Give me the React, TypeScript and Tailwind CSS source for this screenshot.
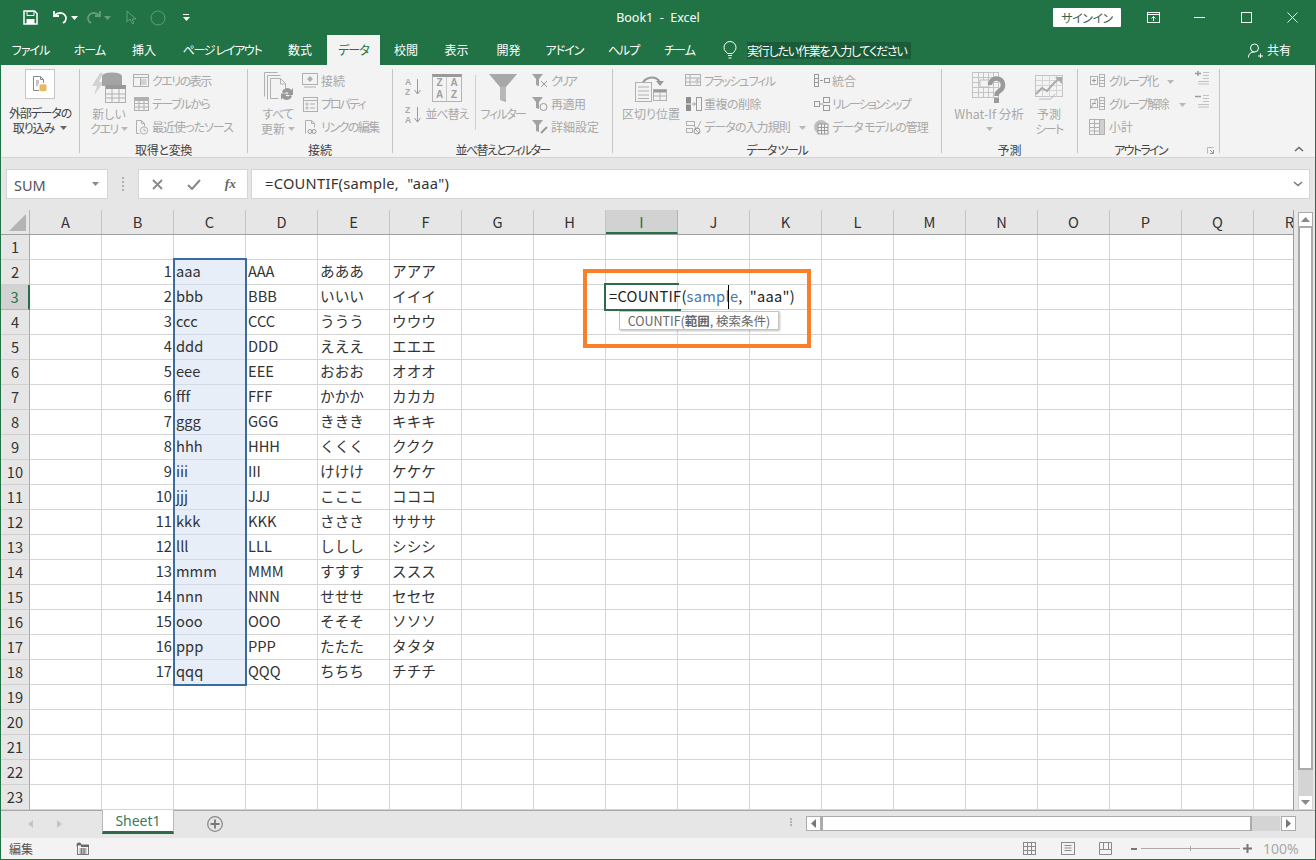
import React from 'react';

const G = '#b0b0b0';

const Ic = ({ w = 16, h = 16, children, cls = '' }: { w?: number; h?: number; children: React.ReactNode; cls?: string }) => (
  <svg width={w} height={h} viewBox={`0 0 ${w} ${h}`} fill="none" className={'shrink-0 ' + cls}>{children}</svg>
);

const Arrow = ({ c = '#8a8a8a' }: { c?: string }) => (
  <svg width="7" height="4" viewBox="0 0 7 4" className="inline-block shrink-0"><path d="M0 0h7L3.5 4z" fill={c} /></svg>
);

const Small = ({ icon, text, arrow, gap = 'gap-[3px]', tr = '' }: { icon: React.ReactNode; text: string; arrow?: string; gap?: string; tr?: string }) => (
  <div className={'flex items-center h-[23px] whitespace-nowrap text-[12px] text-[#a8a8a8] ' + gap}>
    {icon}
    <span className={tr}>{text}</span>
    {arrow && <span className={arrow}><Arrow c="#b8b8b8" /></span>}
  </div>
);

const Large = ({ icon, lines, cls }: { icon: React.ReactNode; lines: React.ReactNode[]; cls: string }) => (
  <div className={'flex flex-col items-center shrink-0 ' + cls}>
    <div className="h-[37px] flex items-center justify-center">{icon}</div>
    {lines.map((l, i) => (
      <div key={i} className="h-[15px] leading-[15px] text-[12px] whitespace-nowrap flex items-center gap-[3px] text-[#a8a8a8]">{l}</div>
    ))}
  </div>
);

const Group = ({ w, label, children, labelCls = '', extra }: { w: string; label: string; children: React.ReactNode; labelCls?: string; extra?: React.ReactNode }) => (
  <div className={'h-[84px] shrink-0 flex flex-col border-r border-[#c6c6c6] ' + w}>
    <div className="h-[73px] shrink-0 flex items-start">{children}</div>
    <div className={'relative h-[16px] shrink-0 leading-[16px] text-[12px] text-[#444] text-center whitespace-nowrap ' + labelCls}>
      {label}
      {extra}
    </div>
  </div>
);

/* ribbon icons */
const IcQuery = () => (
  <Ic><rect x=".5" y="1.5" width="15" height="12" stroke={G} /><path d="M1 4.500h14M7.500 7h6M7.500 9h6M7.500 11h6M7.500 5v8" stroke={G} /></Ic>
);
const IcTable = () => (
  <Ic><rect x="1.5" y="1.5" width="14" height="13" stroke={G} /><path d="M1.500 4.500h14M1.500 7.500h14M1.500 11h14M6 2v13M11 2v13" stroke={G} /><path d="M1.500 2h14v2h-14z" fill={G} /></Ic>
);
const IcRecent = () => (
  <Ic><path d="M3.500 14.500v-13h5l3 3v3M3.500 14.500h3M8.500 1.500v3h3" stroke={G} /><circle cx="11" cy="11.500" r="3.700" stroke={G} /><path d="M11 9.500v2.200h2" stroke={G} /></Ic>
);
const IcConn = () => (
  <Ic><rect x=".5" y=".5" width="15" height="11" stroke={G} /><path d="M2 14h12" stroke={G} /><path d="M5 6l3-3 3 3-3 3z" fill={G} /></Ic>
);
const IcProp = () => (
  <Ic><rect x="1.500" y="1.500" width="14" height="14" stroke={G} /><path d="M1.500 4.500h14" stroke={G} /><path d="M4 7h2v2H4zM4 11h2v2H4z" stroke={G} strokeWidth=".8" /><path d="M8 8h5M8 12h5" stroke={G} /></Ic>
);
const IcLink = () => (
  <Ic><path d="M3.500 14.500v-13h6l3 3v4M9.500 1.500v3h3" stroke={G} /><circle cx="8" cy="12.500" r="2" stroke="#999" /><circle cx="12" cy="12.500" r="2" stroke="#999" /></Ic>
);
const IcNew = () => (
  <Ic w={36} h={34}>
    <path d="M9 2L1 15h5l-3 9 10-13H8l4-9z" fill="#d2d2d2" />
    <ellipse cx="21" cy="5" rx="10" ry="3.500" fill="#a4a4a4" />
    <path d="M11 5v10h20V5z" fill="#a4a4a4" />
    <rect x="14.500" y="14.500" width="20" height="17" fill="#f3f3f3" stroke={G} />
    <path d="M15 14h20v4H15z" fill="#999" />
    <path d="M15 23h19M15 27h19M21 18v13M28 18v13" stroke={G} />
  </Ic>
);
const IcRefresh = () => (
  <Ic w={32} h={34}>
    <path d="M2.500 1.500h13M2.500 1.500v24M5.500 4.500h13M5.500 4.500v24" stroke={G} />
    <path d="M8.500 7.500h10l5 5v6M8.500 7.500v20h8M18.500 8v5h5" stroke={G} />
    <path d="M20 21a5.500 5.500 0 0 1 9.500-2l1.500-2v7h-6.500l2-2a3 3 0 0 0-4.500.5zM30 25a5.500 5.500 0 0 1-9.500 2l-1.500 2v-6.500h6.500l-2 2a3 3 0 0 0 4.500-.5z" fill="#999" />
  </Ic>
);
const IcAZ = ({ flip }: { flip?: boolean }) => (
  <span className="relative w-[16px] h-[20px] flex flex-col font-['Liberation_Sans',sans-serif] text-[8.5px] leading-[10px] font-bold text-[#a8a8a8]">
    <span className="block h-[10px]">{flip ? 'Z' : 'A'}</span>
    <span className="block h-[10px]">{flip ? 'A' : 'Z'}</span>
    <svg width="7" height="16" viewBox="0 0 7 16" className="absolute right-0 top-[2px]"><path d="M3.500 0v15M.5 11l3 4 3-4" stroke="#999" fill="none" /></svg>
  </span>
);
const IcSort = () => (
  <span className="w-[30px] h-[28px] border border-[#b4b4b4] border-t-[3px] border-t-[#999] grid grid-cols-2 font-['Liberation_Sans',sans-serif] text-[10px] leading-[12px] font-bold text-[#a0a0a0] text-center">
    <span className="border-r border-[#c8c8c8]"><span className="block h-[12px]">Z</span><span className="block h-[12px]">A</span></span>
    <span><span className="block h-[12px]">A</span><span className="block h-[12px]">Z</span></span>
  </span>
);
const IcFilter = () => (
  <Ic w={28} h={30}><path d="M0 1h28L17 14v15l-6-2V14z" fill="#a8a8a8" /><path d="M11 14h6v13h-6z" fill="#b8b8b8" /></Ic>
);
const MiniFunnel = ({ children }: { children?: React.ReactNode }) => (
  <Ic w={17} h={16}><path d="M0 1h11L7 6v7l-3-1V6z" fill="#a2a2a2" />{children}</Ic>
);
const IcSplit = () => (
  <Ic w={34} h={31}>
    <path d="M8 13a10 10 0 0 1 18-3" stroke="#999" strokeWidth="2" />
    <path d="M22 9h8l-4 5z" fill="#999" />
    <rect x="1.500" y="10.500" width="16" height="19" fill="#f3f3f3" stroke={G} />
    <path d="M4 15h11M4 19h11M4 23h11M4 26.500h11" stroke={G} />
    <rect x="19.500" y="17.500" width="13" height="11" stroke={G} />
    <path d="M20 18h12v2.500H20z" fill="#999" />
    <path d="M20 24h12M26 20v8" stroke={G} />
  </Ic>
);
const IcFlash = () => (
  <Ic w={17} h={16}><rect x=".5" y="1.500" width="15" height="11" stroke={G} /><path d="M1 5h14M1 9h14M5 2v10" stroke={G} /><path d="M11 6l5-2-3 4h2l-5 6 2-5H10z" fill="#c8c8c8" /></Ic>
);
const IcDedup = () => (
  <Ic w={17} h={16}><rect x="1" y="1" width="5" height="14" fill="#8e8e8e" /><rect x="11.500" y="1.500" width="5" height="13" stroke="#9a9a9a" /><path d="M7 8h3M9 6.500L10.500 8 9 9.500" stroke="#999" /><path d="M1 8h5M12 8h4" stroke="#f3f3f3" /></Ic>
);
const IcValid = () => (
  <Ic w={17} h={16}><rect x="1.500" y="2.500" width="8" height="4" stroke={G} /><rect x="1.500" y="9.500" width="6" height="4" stroke={G} /><path d="M9 7l3 3 4-8" stroke={G} /><circle cx="12" cy="12" r="3" stroke="#999" /><path d="M10 10l4 4" stroke="#999" /></Ic>
);
const IcMerge = () => (
  <Ic w={17} h={16}><rect x="1.500" y="1.500" width="4" height="12" stroke="#9a9a9a" /><path d="M1.500 5.500h4M1.500 9.500h4" stroke="#9a9a9a" /><path d="M7 7.500h3" stroke="#999" /><rect x="11.500" y="5.500" width="5" height="4" stroke="#9a9a9a" /></Ic>
);
const IcRelation = () => (
  <Ic w={17} h={16}><rect x="1.500" y="5.500" width="5" height="5" stroke="#9a9a9a" /><rect x="10.500" y="1.500" width="6" height="5" stroke="#9a9a9a" /><rect x="10.500" y="9.500" width="6" height="5" stroke="#9a9a9a" /><path d="M6.500 8h4" stroke="#9a9a9a" /></Ic>
);
const IcModel = () => (
  <Ic w={17} h={16}><circle cx="8" cy="8" r="7" fill="#c0c0c0" /><rect x="5" y="5" width="10" height="10" fill="#f3f3f3" stroke="#999" /><path d="M5 8.500h10M5 11.500h10M8.500 5v10M11.500 5v10" stroke="#999" /></Ic>
);
const IcWhatIf = () => (
  <Ic w={34} h={32}>
    <rect x=".5" y=".5" width="26" height="25" stroke="#c4c4c4" />
    <path d="M1 5.500h26M1 10.500h26M1 15.500h26M1 20.500h26M6.500 1v25M11.500 1v25M16.500 1v25M21.500 1v25" stroke="#c4c4c4" />
    <rect x="8" y="8" width="9" height="7" fill="#f3f3f3" stroke="#bbb" />
    <path d="M18 13a6.500 6.500 0 1 1 10 5.500c-2.500 1.500-3.500 2.500-3.500 5.500" stroke="#9a9a9a" strokeWidth="4.500" />
    <rect x="22" y="26" width="5" height="5" fill="#9a9a9a" />
  </Ic>
);
const IcForecast = () => (
  <Ic w={28} h={26}>
    <rect x=".5" y=".5" width="27" height="21" stroke="#c4c4c4" />
    <path d="M1 5.500h27M1 10.500h27M1 15.500h27M7.500 1v21M14.500 1v21M21.500 1v21" stroke="#d4d4d4" />
    <path d="M1 19l6-6 5 3 7-8 5-4" stroke="#aaa" strokeWidth="2" />
    <path d="M20 2h7v7z" fill="#aaa" />
    <path d="M4 24h12l4-5" stroke="#bbb" />
  </Ic>
);
const IcGroup = ({ minus }: { minus?: boolean }) => (
  <Ic w={17} h={16}>
    <rect x="1.500" y="3.500" width="7" height="8" stroke={G} />
    <path d={minus ? 'M3 7.500h4' : 'M3 7.500h4M5 5.500v4'} stroke="#999" />
    {minus && <path d="M1 13L8 2" stroke={G} />}
    <rect x="10.500" y="1.500" width="5" height="12" stroke={G} />
    <path d="M10.500 4.500h5M10.500 7.500h5M10.500 10.500h5" stroke={G} />
  </Ic>
);
const IcSubtotal = () => (
  <Ic w={17} h={16}>
    <rect x=".5" y=".5" width="15" height="15" stroke={G} />
    <path d="M1 4.500h14M1 8.500h14M1 12h14M5.500 1v14M10.500 1v14" stroke={G} />
    <path d="M11 1h4v14h-4z" fill="#cfcfcf" />
  </Ic>
);
const IcShow = ({ minus }: { minus?: boolean }) => (
  <Ic w={14} h={14}>
    <path d={minus ? 'M0 2.500h6' : 'M0 2.500h6M3 0v5'} stroke="#9a9a9a" strokeWidth="1.500" />
    <path d="M8 1.500h6M8 4.500h6M8 7.500h6M3 10.500h11M3 13h11" stroke="#c2c2c2" />
  </Ic>
);

const Title = () => (
  <div className="h-[35px] flex items-center text-white">
    <div className="w-[599px] flex items-center pl-[22px] shrink-0">
      <Ic w={15} h={15}><path d="M1 1h10.500L14 3.500V14H1z" stroke="#fff" strokeWidth="1.500" /><path d="M4 1.500h7v4H4z" stroke="#fff" /><path d="M3.500 14V9h8v5" fill="#fff" /></Ic>
      <Ic w={15} h={15} cls="ml-[15px]"><path d="M1 1v5h5" stroke="#fff" strokeWidth="1.800" /><path d="M1.500 5.500C4 3 7 2.500 10 3.500c3 1.500 4 5 2 8l-2 1.500" stroke="#fff" strokeWidth="1.800" /></Ic>
      <span className="ml-[3px] flex"><Arrow c="#fff" /></span>
      <Ic w={15} h={15} cls="ml-[8px] opacity-30"><path d="M14 1v5H9" stroke="#fff" strokeWidth="1.800" /><path d="M13.500 5.500C11 3 8 2.500 5 3.500c-3 1.500-4 5-2 8l2 1.500" stroke="#fff" strokeWidth="1.800" /></Ic>
      <span className="ml-[3px] flex opacity-30"><Arrow c="#fff" /></span>
      <Ic w={11} h={16} cls="ml-[15px] opacity-30"><path d="M1 1v11l3-3 2.500 5 1.500-1L6 9h4z" stroke="#fff" /></Ic>
      <Ic w={16} h={16} cls="ml-[13px] opacity-30"><circle cx="8" cy="8" r="7" stroke="#fff" /></Ic>
      <span className="ml-[17px] flex flex-col gap-[2px]"><span className="block w-[6px] h-[1px] bg-white" /><Arrow c="#fff" /></span>
    </div>
    <div className="w-[116px] pt-[1px] text-center text-[12.5px] font-['Noto_Sans','Liberation_Sans',sans-serif] whitespace-pre shrink-0">Book1  -  Excel</div>
    <div className="flex items-center">
      <div className="ml-[337px] w-[68px] h-[19px] bg-white rounded-[1px] text-[12px] tracking-[-0.5px] leading-[19px] text-center text-[#3f5f4e]">サインイン</div>
      <Ic w={14} h={12} cls="ml-[26px]"><rect x=".5" y=".5" width="12" height="10" stroke="#fff" /><path d="M0 2.500h13M6.500 9V4.500M4.500 6.500l2-2 2 2" stroke="#fff" /></Ic>
      <span className="ml-[33px] block w-[11px] h-[1px] bg-white" />
      <span className="ml-[36px] block w-[11px] h-[11px] border border-white" />
      <Ic w={11} h={11} cls="ml-[35px]"><path d="M.5.500l10 10M10.500.500l-10 10" stroke="#fff" /></Ic>
    </div>
  </div>
);

const tabs: [string, string, string][] = [
  ['ファイル', 'w-[59px]', 'tracking-[-1px]'],
  ['ホーム', 'w-[59px]', 'tracking-[-1px]'],
  ['挿入', 'w-[50px]', ''],
  ['ページ レイアウト', 'w-[106px]', 'tracking-[-1.3px]'],
  ['数式', 'w-[50px]', ''],
  ['データ', 'w-[57px]', 'tracking-[-1px]'],
  ['校閲', 'w-[48px]', ''],
  ['表示', 'w-[53px]', ''],
  ['開発', 'w-[51px]', ''],
  ['アドイン', 'w-[61px]', 'tracking-[-1px]'],
  ['ヘルプ', 'w-[57px]', 'tracking-[-1px]'],
  ['チーム', 'w-[55px]', 'tracking-[-1px]'],
];

const Tabs = () => (
  <div className="h-[30px] flex items-stretch text-white text-[12px]">
    {tabs.map(([t, w, tr]) =>
      t === 'データ' ? (
        <div key={t} className={w + ' px-[2px] shrink-0'}>
          <div className={'h-full bg-[#f3f3f3] text-[#217346] flex items-center justify-center ' + tr}>{t}</div>
        </div>
      ) : (
        <div key={t} className={w + ' shrink-0 flex items-center justify-center whitespace-nowrap ' + tr}>{t}</div>
      )
    )}
    <div className="flex items-center ml-[16px]">
      <Ic w={14} h={18}><path d="M4.500 12.500C3 10.500 1 9.500 1 6.500a6 6 0 0 1 12 0c0 3-2 4-3.500 6z" stroke="#fff" /><path d="M5 14.500h4M5.500 17h3" stroke="#fff" /></Ic>
      <div className="ml-[10px] w-[164px] h-[17px] bg-[#1a5c38] leading-[17px] whitespace-nowrap tracking-[-1.2px]">実行したい作業を入力してください</div>
    </div>
    <div className="flex items-center ml-[337px]">
      <Ic w={15} h={15}><circle cx="6.500" cy="5" r="4" stroke="#fff" /><path d="M.5 14.500c0-4 2.500-5.500 6-5.500M10 13h5M12.500 10.500v5" stroke="#fff" /></Ic>
      <span className="ml-[4px]">共有</span>
    </div>
  </div>
);

const Ribbon = () => (
  <div className="h-[93px] bg-[#f3f3f3] border-b border-[#d4d4d4] pt-[4px] flex shrink-0 relative">
    <Group w="w-[79px]" label="">
      <div className="w-full flex flex-col items-center text-[12px] text-[#444]">
        <div className="w-[30px] h-[30px] bg-white border border-[#c6c6c6] flex items-center justify-center">
          <Ic w={14} h={16}><path d="M.5 14.500V.5h7l3 3V7M7.500.5v3h3M.5 14.500H6" stroke="#888" /><path d="M3 5h3M3 7h3M3 9h2" stroke="#888" /><path d="M6.500 9c0-1 7-1 7 0v5.500c0 1-7 1-7 0z" fill="#e8b865" /></Ic>
        </div>
        <div className="mt-[6px] leading-[15px] whitespace-nowrap tracking-[-1.200px]">外部データの</div>
        <div className="leading-[15px] whitespace-nowrap flex items-center gap-[6px]"><span className="tracking-[-1px]">取り込み</span><Arrow c="#666" /></div>
      </div>
    </Group>
    <Group w="w-[168px]" label="取得と変換" labelCls="tracking-[-0.3px]">
      <Large cls="ml-[5px] w-[48px]" icon={<IcNew />} lines={['新しい', <><span className="tracking-[-1.500px]">クエリ</span> <Arrow c="#b8b8b8" /></>]} />
      <div className="flex flex-col">
        <Small icon={<IcQuery />} text="クエリの表示" tr="tracking-[-1.500px]" />
        <Small icon={<IcTable />} text="テーブルから" tr="tracking-[-1.400px]" />
        <Small icon={<IcRecent />} text="最近使ったソース" tr="tracking-[-1px]" />
      </div>
    </Group>
    <Group w="w-[145px]" label="接続">
      <Large cls="ml-[6px] w-[48px]" icon={<IcRefresh />} lines={[<span className="tracking-[-0.500px]">すべて</span>, <>更新 <Arrow c="#b8b8b8" /></>]} />
      <div className="flex flex-col">
        <Small icon={<IcConn />} text="接続" />
        <Small icon={<IcProp />} text="プロパティ" tr="tracking-[-2px]" />
        <Small icon={<IcLink />} text="リンクの編集" tr="tracking-[-1.500px]" />
      </div>
    </Group>
    <Group w="w-[220px]" label="並べ替えとフィルター" labelCls="tracking-[-1.600px]">
      <div className="ml-[12px] w-[19px] mt-[8px] flex flex-col gap-[8px] shrink-0"><IcAZ /><IcAZ flip /></div>
      <Large cls="w-[46px]" icon={<IcSort />} lines={[<span className="tracking-[-1px]">並べ替え</span>]} />
      <div className="h-[55px] mt-[6px] ml-[5px] border-l border-[#d0d0d0]" />
      <Large cls="ml-[4px] w-[46px]" icon={<IcFilter />} lines={[<span className="tracking-[-1.500px]">フィルター</span>]} />
      <div className="flex flex-col ml-[6px]">
        <Small icon={<MiniFunnel><path d="M9 8l6 6M15 8l-6 6" stroke="#999" /></MiniFunnel>} gap="gap-[2px]" text="クリア" tr="tracking-[-2.500px]" />
        <Small icon={<MiniFunnel><circle cx="11.500" cy="11" r="3.500" stroke="#999" /></MiniFunnel>} gap="gap-[2px]" text="再適用" tr="tracking-[-0.500px]" />
        <Small icon={<MiniFunnel><path d="M9 14l6-6" stroke="#999" strokeWidth="2" /></MiniFunnel>} gap="gap-[2px]" text="詳細設定" />
      </div>
    </Group>
    <Group w="w-[329px]" label="データ ツール" labelCls="tracking-[-1.300px]">
      <Large cls="ml-[8px] w-[60px]" icon={<IcSplit />} lines={['区切り位置']} />
      <div className="flex flex-col ml-[4px] w-[128px] shrink-0">
        <Small icon={<IcFlash />} text="フラッシュ フィル" gap="gap-[2px]" tr="tracking-[-1.500px]" />
        <Small icon={<IcDedup />} text="重複の削除" gap="gap-[2px]" tr="tracking-[-0.500px]" />
        <Small icon={<IcValid />} text="データの入力規則" gap="gap-[2px]" arrow="ml-[7px]" tr="tracking-[-0.900px]" />
      </div>
      <div className="flex flex-col">
        <Small icon={<IcMerge />} text="統合" gap="gap-[2px]" />
        <Small icon={<IcRelation />} text="リレーションシップ" gap="gap-[2px]" tr="tracking-[-1.800px]" />
        <Small icon={<IcModel />} text="データ モデルの管理" gap="gap-[2px]" tr="tracking-[-1px]" />
      </div>
    </Group>
    <Group w="w-[136px]" label="予測">
      <Large cls="ml-[9px] w-[76px]" icon={<IcWhatIf />} lines={[<span className="text-[12.500px]">What-If 分析</span>, <Arrow c="#b8b8b8" />]} />
      <Large cls="ml-[2px] w-[40px]" icon={<IcForecast />} lines={['予測', <span className="tracking-[-1.500px]">シート</span>]} />
    </Group>
    <Group
      w="w-[142px]"
      label="アウトライン"
      labelCls="pr-[16px] tracking-[-1.700px]"
      extra={
        <Ic w={7} h={7} cls="absolute right-[5px] top-[5px]"><path d="M.5 6.500v-6h6" stroke="#b8b8b8" /><path d="M6.500 3v3.500H3M3 3l3 3" stroke="#999" /></Ic>
      }
    >
      <div className="flex flex-col ml-[11px] w-[106px] shrink-0">
        <Small icon={<IcGroup />} text="グループ化" arrow="ml-[6px]" tr="tracking-[-1.500px]" />
        <Small icon={<IcGroup minus />} text="グループ解除" arrow="ml-[8px]" tr="tracking-[-1.500px]" />
        <Small icon={<IcSubtotal />} text="小計" />
      </div>
      <div className="flex flex-col gap-[9px] pt-[2px]">
        <IcShow />
        <IcShow minus />
      </div>
    </Group>
    <Ic w={10} h={6} cls="absolute right-[11px] bottom-[5px]"><path d="M1 5l4-3.500L9 5" stroke="#666" strokeWidth="1.500" /></Ic>
  </div>
);

const FormulaBar = () => (
  <div className="h-[52px] bg-[#e6e6e6] flex items-start pt-[11px] shrink-0 font-['Noto_Sans','Liberation_Sans',sans-serif]">
    <div className="ml-[5px] w-[102px] h-[30px] bg-white border border-[#d4d4d4] flex items-center justify-between pl-[7px] pr-[8px] text-[14.5px] text-[#555]">
      <span className="pt-[3px]">SUM</span>
      <Arrow c="#888" />
    </div>
    <div className="ml-[14px] mt-[8px] flex flex-col gap-[2px] w-[2px]">
      {[0, 1, 2, 3].map(i => <span key={i} className="block w-[2px] h-[2px] bg-[#b0b0b0]" />)}
    </div>
    <div className="ml-[14px] w-[110px] h-[30px] bg-white border border-[#d4d4d4] flex items-center justify-between pl-[13px] pr-[11px]">
      <Ic w={11} h={11}><path d="M1 1l9 9M10 1l-9 9" stroke="#888" strokeWidth="1.800" /></Ic>
      <Ic w={14} h={11}><path d="M1 6l4 4 8-9" stroke="#888" strokeWidth="2" /></Ic>
      <span className="font-['Liberation_Serif',serif] italic text-[13.5px] text-[#666] font-bold leading-none">fx</span>
    </div>
    <div className="ml-[3px] w-[1059px] h-[30px] bg-white border border-[#d4d4d4] flex items-center justify-between pl-[13px] pr-[6px] text-[14.67px] text-[#333] whitespace-pre">
      <span className="pb-[2px] tracking-[0.27px]">=COUNTIF(sample,  "aaa")</span>
      <Ic w={10} h={6}><path d="M1 1l4 3.500L9 1" stroke="#777" strokeWidth="1.500" /></Ic>
    </div>
  </div>
);

const COLS = 'ABCDEFGHIJKLMNOPQR'.split('');
const lower = 'abcdefghijklmnopq'.split('');
const hira = 'あいうえおかきくけこさしすせそたち'.split('');
const kata = 'アイウエオカキクケコサシスセソタチ'.split('');

const cellText = (r: number, c: number): React.ReactNode => {
  const i = r - 2;
  if (i < 0 || i > 16) return null;
  if (c === 1) return i + 1;
  if (c === 2) return lower[i].repeat(3);
  if (c === 3) return lower[i].toUpperCase().repeat(3);
  if (c === 4) return hira[i].repeat(3);
  if (c === 5) return kata[i].repeat(3);
  return null;
};

const Sheet = () => (
  <div className="h-[600px] flex shrink-0 bg-[#e6e6e6]">
    <div className="relative w-[1292px] h-[600px] overflow-hidden shrink-0 bg-white font-['Noto_Sans_CJK_JP','Noto_Sans',sans-serif] [font-feature-settings:normal] text-[14.67px] text-[#333]">
      <div className="flex h-[25px] bg-[#e6e6e6] border-b border-[#9f9f9f]">
        <div className="w-[29px] shrink-0 border-r border-[#b4b4b4] flex items-end justify-end pr-[3px] pb-[3px]">
          <svg width="17" height="17" viewBox="0 0 17 17"><path d="M17 0v17H0z" fill="#b4b4b4" /></svg>
        </div>
        {COLS.map(c => (
          <div key={c} className={'w-[72px] shrink-0 text-center leading-[24px] border-r ' + (c === 'I' ? 'bg-[#d2d2d2] text-[#217346] border-[#b4b4b4] border-b-2 border-b-[#217346]' : 'border-[#c4c4c4]')}>{c}</div>
        ))}
      </div>
      {Array.from({ length: 23 }, (_, idx) => idx + 1).map(r => (
        <div key={r} className="flex h-[25px]">
          <div className={'w-[29px] shrink-0 text-center leading-[24px] border-b ' + (r === 3 ? 'bg-[#d2d2d2] text-[#217346] border-[#b4b4b4] border-r-2 border-r-[#217346]' : 'bg-[#e6e6e6] border-[#d0d0d0] border-r border-r-[#a8a8a8]')}>{r}</div>
          {COLS.map((c, ci) => {
            const sel = ci === 2 && r >= 2 && r <= 18;
            const txt = cellText(r, ci);
            return (
              <div key={c} className={'w-[72px] shrink-0 border-r border-b leading-[22px] whitespace-nowrap ' + (sel ? 'bg-[#e7eef8] border-[#d2dae6] ' : 'border-[#d4d4d4] ') + (ci === 1 ? 'text-right pr-[1px]' : 'pl-[2px]')}>
                {txt}
                {c === 'I' && r === 3 && (
                  <span className="relative whitespace-pre text-[#222] ml-[1px] tracking-[0.27px]">=COUNTIF(<span className="text-[#4a76ad]">sample</span>,  "aaa")</span>
                )}
              </div>
            );
          })}
        </div>
      ))}
      {/* selection range */}
      <div className="absolute left-[172px] top-[48px] w-[74px] h-[428px] border-2 border-[#3c6b9e]" />
      {/* active cell */}
      <div className="absolute left-[603px] top-[73px] w-[75px] h-[28px] border-2 border-r-0 border-[#2f6b4b]" />
      <div className="absolute left-[675px] top-[99px] w-[5px] h-[3px] bg-[#2f6b4b]" />
      <div className="absolute left-[727px] top-[75px] w-[1px] h-[24px] bg-black" />
      {/* tooltip */}
      <div className="absolute left-[618px] top-[101px] w-[160px] h-[19px] bg-white border border-[#c4c4c4] shadow-[1px_1px_2px_rgba(0,0,0,0.25)] text-[12.5px] leading-[17px] text-[#666] text-center whitespace-nowrap">COUNTIF(<span className="font-bold">範囲</span>, 検索条件)</div>
      {/* annotation frame */}
      <div className="absolute left-[582px] top-[59px] w-[228px] h-[79px] border-[4px] border-[#fa7f27]" />
    </div>
    <div className="flex-1 border-l border-[#9f9f9f] pt-[2px] pl-[4px] pr-[2px] flex flex-col">
      <div className="h-[15px] bg-white border border-[#ababab] flex items-center justify-center"><svg width="9" height="5" viewBox="0 0 9 5"><path d="M0 5l4.500-5L9 5z" fill="#888" /></svg></div>
      <div className="h-[543px] bg-white border-2 border-[#ababab] border-t-[1px]" />
      <div className="flex-1 bg-[#d4d4d4]" />
      <div className="h-[15px] bg-white border border-[#d4d4d4] flex items-center justify-center"><svg width="9" height="5" viewBox="0 0 9 5"><path d="M0 0l4.500 5L9 0z" fill="#888" /></svg></div>
    </div>
  </div>
);

const SheetBar = () => (
  <div className="h-[28px] bg-[#e6e6e6] border-t border-[#a8a8a8] flex items-start shrink-0">
    <svg width="5" height="8" viewBox="0 0 5 8" className="ml-[27px] mt-[9px]"><path d="M5 0v8L0 4z" fill="#c4c4c4" /></svg>
    <svg width="5" height="8" viewBox="0 0 5 8" className="ml-[24px] mt-[9px]"><path d="M0 0v8l5-4z" fill="#c4c4c4" /></svg>
    <div className="ml-[40px] w-[72px] h-[24px] -mt-[1px] bg-white border-x border-[#b8b8b8] border-b-[3px] border-b-[#2f6b4b] text-center text-[14px] leading-[21px] text-[#3c7a5b] font-['Noto_Sans',sans-serif]">Sheet1</div>
    <Ic w={16} h={16} cls="ml-[33px] mt-[5px]"><circle cx="8" cy="8" r="7.300" stroke="#8a8a8a" strokeWidth="1.300" /><path d="M8 3.500v9M3.500 8h9" stroke="#777" strokeWidth="1.800" /></Ic>
    <div className="ml-[567px] mt-[7px] flex flex-col gap-[1px]">
      {[0, 1, 2].map(i => <span key={i} className="block w-[2px] h-[2px] bg-[#b0b0b0]" />)}
    </div>
    <div className="ml-[14px] mt-[5px] w-[15px] h-[15px] bg-white border border-[#ababab] flex items-center justify-center"><svg width="5" height="9" viewBox="0 0 5 9"><path d="M5 0v9L0 4.500z" fill="#777" /></svg></div>
    <div className="mt-[5px] w-[431px] h-[15px] bg-white border-2 border-l-2 border-[#ababab] border-y-[1px]" />
    <div className="mt-[5px] w-[28px] h-[15px] bg-[#d4d4d4]" />
    <div className="ml-[1px] mt-[5px] w-[15px] h-[15px] bg-white border border-[#ababab] flex items-center justify-center"><svg width="5" height="9" viewBox="0 0 5 9"><path d="M0 0v9l5-4.500z" fill="#777" /></svg></div>
  </div>
);

const Status = () => (
  <div className="h-[21px] bg-[#f3f3f3] flex items-center shrink-0 text-[12px] text-[#555]">
    <span className="ml-[8px] w-[24px] whitespace-nowrap">編集</span>
    <Ic w={13} h={13} cls="ml-[43px]"><circle cx="3" cy="3" r="2.500" fill="#666" /><rect x="1.500" y="3" width="11" height="9.500" fill="#f3f3f3" stroke="#777" /><path d="M3.500 7h7M3.500 9h7M3.500 11h7M5.500 6v6M8 6v6" stroke="#777" /><path d="M5 3h8v2H5z" fill="#666" /></Ic>
    <Ic w={14} h={14} cls="ml-[934px]"><rect x=".5" y=".5" width="12" height="12" stroke="#8a8a8a" /><path d="M.5 4.500h12M.5 8.500h12M4.500.5v12M8.500.5v12" stroke="#8a8a8a" /></Ic>
    <Ic w={15} h={14} cls="ml-[24px]"><rect x=".5" y=".5" width="13" height="12" stroke="#8a8a8a" /><path d="M3.500 3.500h7M3.500 6h7M3.500 8.500h7" stroke="#8a8a8a" /></Ic>
    <Ic w={15} h={14} cls="ml-[23px]"><path d="M.5.500h12v12H.5zM4.500.5v7h5V.5M.5 7.500h4M9.500 7.500h3" stroke="#8a8a8a" /></Ic>
    <span className="ml-[17px] block w-[6px] h-[2px] bg-[#777]" />
    <div className="ml-[4px] w-[99px] h-[1px] bg-[#a8a8a8] flex justify-center items-center"><span className="block w-[1px] h-[5px] bg-[#a8a8a8]" /></div>
    <Ic w={9} h={9} cls="ml-[3px]"><path d="M4.500 0v9M0 4.500h9" stroke="#777" strokeWidth="2" /></Ic>
    <span className="ml-[11px] text-[14px] text-[#a8a8a8] font-['Noto_Sans',sans-serif]">100%</span>
  </div>
);

export default function App() {
  return (
    <div className="w-[1316px] h-[860px] overflow-hidden flex flex-col bg-[#217346] px-[1px] pb-[1px] font-['Noto_Sans_CJK_JP','Noto_Sans',sans-serif] [font-feature-settings:'palt']">
      <Title />
      <Tabs />
      <Ribbon />
      <FormulaBar />
      <Sheet />
      <SheetBar />
      <Status />
    </div>
  );
}
